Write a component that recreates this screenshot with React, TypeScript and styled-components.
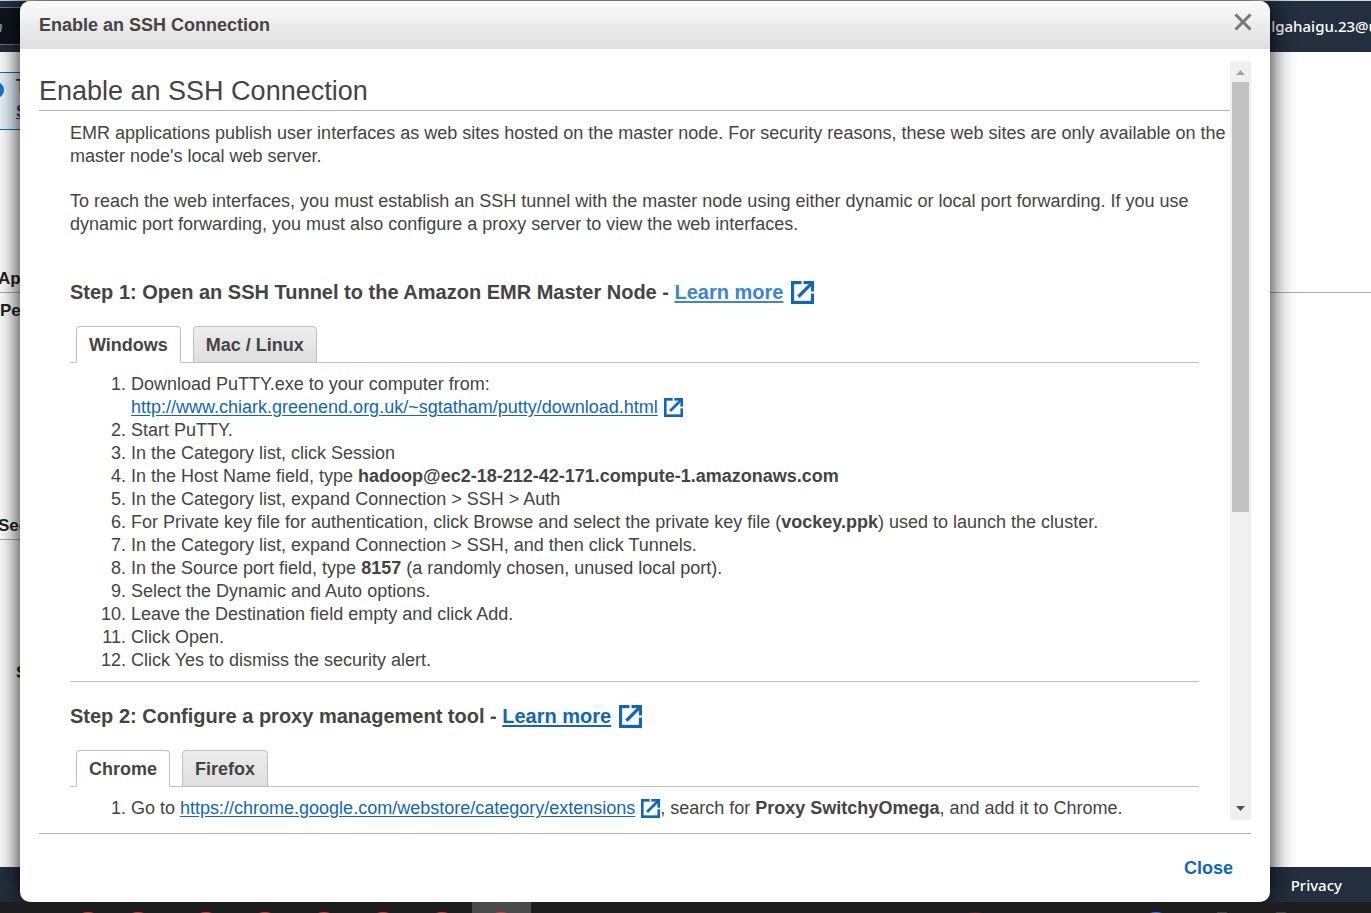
import React from "react";
import styled, { createGlobalStyle } from "styled-components";

const blue = "#1166bb";

const GlobalStyle = createGlobalStyle`
  * { box-sizing: border-box; }
  body {
    margin: 0;
    background: #fff;
    color: #444;
    font-family: "Liberation Sans", Arial, sans-serif;
    font-size: 18px;
    line-height: 23px;
  }
`;

/* ---------- console page behind the dialog ---------- */

const Page = styled.div`
  position: relative;
  display: flex;
  flex-direction: column;
  height: 100vh;
  overflow: hidden;
`;

const TopNav = styled.header`
  display: flex;
  align-items: center;
  justify-content: space-between;
  height: 52px;
  flex: none;
  border-top: 1px solid #c9d6dc;
  background: #232f3e;
  color: #fff;
  font: 500 15px/20px "Noto Sans", sans-serif;
`;

const SearchBox = styled.div`
  display: flex;
  align-items: center;
  width: 320px;
  height: 38px;
  margin-bottom: 2px;
  border: 1px solid #6b7883;
  border-left: 0;
  background: #0f151d;
  color: #8d9aa5;
  font-style: italic;
  text-indent: -6px;
`;

const Account = styled.span`
  margin: 0 -7px 2px 0;
`;

const PageBody = styled.main`
  flex: 1;
  min-height: 0;
  color: #222;
  font-size: 17px;
  font-weight: bold;
`;

const Notice = styled.div`
  display: flex;
  gap: 12px;
  width: 50%;
  height: 58px;
  margin-top: 20px;
  border: 1px solid #0073bb;
  border-width: 1px 0;
  background: #eaf3fc;
  font-size: 16px;
  line-height: 26px;
`;

const NoticeIcon = styled.svg`
  flex: none;
  width: 16px;
  height: 16px;
  margin: 9px 0 0 -12px;
`;

const NoticeLink = styled.a`
  display: block;
  color: #16509a;
`;

const PageHeading = styled.h2<{ $gap: number; $ruleWidth: string }>`
  width: ${(p) => p.$ruleWidth};
  margin: ${(p) => p.$gap}px 0 0;
  padding: 0 0 2px;
  border-bottom: 1px solid #aaa;
  text-indent: -2px;
  font-size: 17px;
  line-height: 23px;
`;

const PageText = styled.p`
  margin: 6px 0 0;
`;

const PageNote = styled.p`
  margin: 121px 0 0 16px;
`;

const PageFooter = styled.footer`
  display: flex;
  align-items: center;
  justify-content: flex-end;
  height: 35px;
  flex: none;
  padding: 0 29px;
  background: #232f3e;
  font: 500 15px/20px "Noto Sans", sans-serif;
`;

const FooterLink = styled.a`
  color: #fff;
  text-decoration: none;
`;

const Taskbar = styled.div`
  height: 11px;
  flex: none;
  background: #1d1d1d;
`;

const TaskbarArt = styled.svg`
  display: block;
`;

/* ---------- dialog ---------- */

const Dialog = styled.section`
  position: absolute;
  inset: 1px 101px 11px 20px;
  display: flex;
  flex-direction: column;
  border-radius: 10px;
  overflow: hidden;
  background: #fff;
`;

const DialogShadow = styled.div`
  position: absolute;
  inset: 1px 101px 0 20px;
  border-radius: 10px;
  box-shadow: 0 0 25px rgba(0, 0, 0, 0.95);
`;

const ShadowLayer = styled.div`
  position: absolute;
  inset: 0 0 11px;
  overflow: hidden;
`;

const DialogHeader = styled.header`
  display: flex;
  align-items: center;
  justify-content: space-between;
  height: 48px;
  flex: none;
  padding: 0 18px 0 19px;
  background: linear-gradient(#fbfbfb, #dedede);
`;

const DialogTitle = styled.h1`
  margin: 0;
  font-size: 18px;
  line-height: 23px;
`;

const IconButton = styled.button`
  display: flex;
  margin: 0 0 6px;
  padding: 0;
  border: 0;
  background: none;
  color: #777;
  cursor: pointer;
`;

const ScrollPane = styled.div`
  display: flex;
  flex: 1;
  min-height: 0;
  margin: 12px 19px 13px;
`;

const Content = styled.div`
  flex: 1;
  min-width: 0;
  overflow: hidden;
`;

const Scrollbar = styled.div`
  display: flex;
  flex-direction: column;
  width: 21px;
  flex: none;
  background: #f0f0f0;
`;

const ScrollArrow = styled.svg`
  flex: none;
  width: 21px;
  height: 21px;
`;

const ScrollTrack = styled.div`
  flex: 1;
  padding: 0 2px;
`;

const ScrollThumb = styled.div`
  height: 60%;
  background: #c1c1c1;
`;

const ContentTitle = styled.h2`
  margin: 0;
  padding: 14px 0 2px;
  border-bottom: 1px solid #b4b4b4;
  font-size: 27px;
  font-weight: normal;
  line-height: 33px;
`;

const Intro = styled.div`
  padding: 11px 0 0 31px;
`;

const Copy = styled.div`
  padding: 0 31px;
`;

const Paragraph = styled.p`
  margin: 0 0 22px;
`;

const StepTitle = styled.h3<{ $gap: number }>`
  display: flex;
  align-items: center;
  gap: 8px;
  margin: 0 0 21px;
  padding-top: ${(p) => p.$gap}px;
  font-size: 20px;
  line-height: 26px;
`;

const Link = styled.a<{ $light?: boolean }>`
  color: ${(p) => (p.$light ? "#3c85d2" : blue)};
  text-decoration: underline;
  text-underline-offset: 2px;
`;

const InlineIcon = styled.svg`
  margin: 0 0 0 6px;
  vertical-align: -4px;
`;

const Tabs = styled.div`
  display: flex;
  gap: 12px;
  padding-left: 6px;
  border-bottom: 1px solid #c0c0c0;
`;

const Tab = styled.button<{ $active?: boolean }>`
  height: 37px;
  margin-bottom: -1px;
  padding: 2px 12px 0;
  border: 1px solid #c0c0c0;
  border-bottom-color: ${(p) => (p.$active ? "#fff" : "#c0c0c0")};
  border-radius: 4px 4px 0 0;
  background: ${(p) => (p.$active ? "#fff" : "linear-gradient(#ededed, #dedede)")};
  color: #444;
  font: bold 18px/23px "Liberation Sans", Arial, sans-serif;
`;

const Steps = styled.ol`
  margin: 0;
  padding: 10px 0 0 61px;
`;

const Rule = styled.hr`
  margin: 9px 0 0;
  border: 0;
  border-top: 1px solid #c0c0c0;
`;

const DialogFooter = styled.footer`
  display: flex;
  align-items: center;
  justify-content: flex-end;
  height: 69px;
  flex: none;
  margin: 0 19px;
  padding: 0 18px;
  border-top: 1px solid #b4b4b4;
`;

const CloseButton = styled.button`
  padding: 0;
  border: 0;
  background: none;
  color: ${blue};
  font: bold 18px/23px "Liberation Sans", Arial, sans-serif;
  cursor: pointer;
`;

const ExternalShape = () => (
  <path
    d="M18.7 18.7H5.3V5.3H11V3H3V21H21V13H18.7ZM13 3V5.3H17.1L8 14.4L9.7 16.1L18.7 7V11H21V3Z"
    fill={blue}
    stroke={blue}
    strokeWidth="0.3"
  />
);

const StepIcon = () => (
  <svg width="23" height="23" viewBox="3 3 18 18" aria-hidden="true">
    <ExternalShape />
  </svg>
);

const LinkIcon = () => (
  <InlineIcon width="19" height="19" viewBox="3 3 18 18" aria-hidden="true">
    <ExternalShape />
  </InlineIcon>
);

export default function App() {
  return (
    <>
      <GlobalStyle />
      <Page>
        <TopNav>
          <SearchBox>n</SearchBox>
          <Account>lgahaigu.23@u</Account>
        </TopNav>
        <PageBody>
          <Notice>
            <NoticeIcon viewBox="0 0 16 16" aria-hidden="true">
              <circle cx="8" cy="8" r="8" fill="#1a73d0" />
            </NoticeIcon>
            <div>
              T<NoticeLink href="#s">S</NoticeLink>
            </div>
          </Notice>
          <PageHeading $gap={137} $ruleWidth="100%">Ap</PageHeading>
          <PageText>Pe</PageText>
          <PageHeading $gap={192} $ruleWidth="50%">Sec</PageHeading>
          <PageNote>S</PageNote>
        </PageBody>
        <PageFooter>
          <FooterLink href="#privacy">Privacy</FooterLink>
        </PageFooter>
        <Taskbar>
          <TaskbarArt width="1371" height="11" aria-hidden="true">
            <rect x="472" width="59" height="11" fill="#4a4a4a" />
            {[88, 138, 206, 265, 324, 383, 442, 501].map((x) => (
              <ellipse key={x} cx={x} cy="14" rx="9" ry="4" fill="#e0402e" />
            ))}
            <ellipse cx="975" cy="14" rx="11" ry="4" fill="#5c1c1c" />
            <ellipse cx="1156" cy="14" rx="9" ry="4" fill="#3b7de8" />
            <rect x="1217" y="10" width="10" height="1" fill="#444" />
            <rect x="1276" y="10" width="10" height="1" fill="#444" />
          </TaskbarArt>
        </Taskbar>

        <ShadowLayer>
          <DialogShadow />
        </ShadowLayer>
        <Dialog role="dialog" aria-labelledby="dialog-title">
          <DialogHeader>
            <DialogTitle id="dialog-title">Enable an SSH Connection</DialogTitle>
            <IconButton aria-label="Close dialog">
              <svg width="18" height="18" viewBox="0 0 18 18">
                <path d="M1.5 1.5L16.5 16.5M16.5 1.5L1.5 16.5" stroke="currentColor" strokeWidth="3" />
              </svg>
            </IconButton>
          </DialogHeader>
          <ScrollPane>
            <Content>
              <ContentTitle>Enable an SSH Connection</ContentTitle>
              <Intro>
                <Paragraph>
                  EMR applications publish user interfaces as web sites hosted on the master node. For security
                  reasons, these web sites are only available on the master node's local web server.
                </Paragraph>
                <Paragraph>
                  To reach the web interfaces, you must establish an SSH tunnel with the master node using either
                  dynamic or local port forwarding. If you use dynamic port forwarding, you must also configure a
                  proxy server to view the web interfaces.
                </Paragraph>
              </Intro>
              <Copy>
                <StepTitle $gap={21}>
                  <span>
                    Step 1: Open an SSH Tunnel to the Amazon EMR Master Node -{" "}
                    <Link href="#tunnel" $light>Learn more</Link>
                  </span>
                  <StepIcon />
                </StepTitle>
                <Tabs>
                  <Tab $active>Windows</Tab>
                  <Tab>Mac / Linux</Tab>
                </Tabs>
                <Steps>
                  <li>
                    Download PuTTY.exe to your computer from:
                    <br />
                    <Link href="#putty">http://www.chiark.greenend.org.uk/~sgtatham/putty/download.html</Link>
                    <LinkIcon />
                  </li>
                  <li>Start PuTTY.</li>
                  <li>In the Category list, click Session</li>
                  <li>
                    In the Host Name field, type <b>hadoop@ec2-18-212-42-171.compute-1.amazonaws.com</b>
                  </li>
                  <li>In the Category list, expand Connection &gt; SSH &gt; Auth</li>
                  <li>
                    For Private key file for authentication, click Browse and select the private key file (
                    <b>vockey.ppk</b>) used to launch the cluster.
                  </li>
                  <li>In the Category list, expand Connection &gt; SSH, and then click Tunnels.</li>
                  <li>
                    In the Source port field, type <b>8157</b> (a randomly chosen, unused local port).
                  </li>
                  <li>Select the Dynamic and Auto options.</li>
                  <li>Leave the Destination field empty and click Add.</li>
                  <li>Click Open.</li>
                  <li>Click Yes to dismiss the security alert.</li>
                </Steps>
                <Rule />

                <StepTitle $gap={21}>
                  <span>
                    Step 2: Configure a proxy management tool - <Link href="#proxy">Learn more</Link>
                  </span>
                  <StepIcon />
                </StepTitle>
                <Tabs>
                  <Tab $active>Chrome</Tab>
                  <Tab>Firefox</Tab>
                </Tabs>
                <Steps>
                  <li>
                    Go to <Link href="#extensions">https://chrome.google.com/webstore/category/extensions</Link>
                    <LinkIcon />, search for <b>Proxy SwitchyOmega</b>, and add it to Chrome.
                  </li>
                </Steps>
              </Copy>
            </Content>
            <Scrollbar aria-hidden="true">
              <ScrollArrow viewBox="0 0 21 21">
                <path d="M6 14L10.5 9L15 14Z" fill="#a3a3a3" />
              </ScrollArrow>
              <ScrollTrack>
                <ScrollThumb />
              </ScrollTrack>
              <ScrollArrow viewBox="0 0 21 21">
                <path d="M6 7L10.5 12L15 7Z" fill="#505050" />
              </ScrollArrow>
            </Scrollbar>
          </ScrollPane>
          <DialogFooter>
            <CloseButton>Close</CloseButton>
          </DialogFooter>
        </Dialog>
      </Page>
    </>
  );
}
